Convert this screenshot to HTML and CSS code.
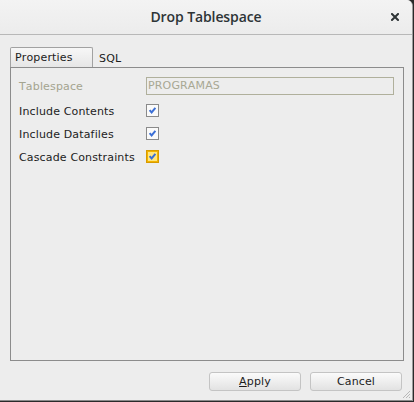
FILE: index.html
```html
<!DOCTYPE html>
<html>
<head>
<meta charset="utf-8">
<link rel="stylesheet" href="styles.css">
</head>
<body>
<div class="window">
  <div class="titlebar">
    <span class="title">Drop Tablespace</span>
    <svg class="close" width="8" height="8" viewBox="0 0 8 8"><path d="M1 1 L7 7 M7 1 L1 7" stroke="#2e3436" stroke-width="2" stroke-linecap="square"/></svg>
  </div>
  <div class="content">
    <div class="tabs">
      <div class="tab active">Properties</div>
      <div class="tab">SQL</div>
    </div>
    <div class="panel">
      <div class="form">
        <label class="lbl disabled">Tablespace</label>
        <div class="field">PROGRAMAS</div>
      </div>
      <div class="checks">
        <div class="row"><span class="lbl">Include Contents</span>
          <svg class="cb" width="13" height="13" viewBox="0 0 13 13"><rect x="0.5" y="0.5" width="12" height="12" fill="#fafafa" stroke="#8a8a8a"/><path d="M3.6 6.2 L5.6 8.4 L9.4 3.9" fill="none" stroke="#3b6fd6" stroke-width="2"/></svg></div>
        <div class="row"><span class="lbl">Include Datafiles</span>
          <svg class="cb" width="13" height="13" viewBox="0 0 13 13"><rect x="0.5" y="0.5" width="12" height="12" fill="#fafafa" stroke="#8a8a8a"/><path d="M3.6 6.2 L5.6 8.4 L9.4 3.9" fill="none" stroke="#3b6fd6" stroke-width="2"/></svg></div>
        <div class="row"><span class="lbl">Cascade Constraints</span>
          <svg class="cb" width="13" height="13" viewBox="0 0 13 13"><rect x="0.5" y="0.5" width="12" height="12" fill="#f2b400" stroke="#d79a00"/><rect x="2" y="2" width="9" height="9" fill="#ffe680"/><path d="M3.6 6.2 L5.6 8.4 L9.4 3.9" fill="none" stroke="#3b6fd6" stroke-width="2"/></svg></div>
      </div>
    </div>
  </div>
  <div class="footer">
    <button class="btn"><u>A</u>pply</button>
    <button class="btn">Cancel</button>
  </div>
  <svg class="grip" width="9" height="9" viewBox="0 0 9 9"><path d="M8 1 L1 8 M8 4 L4 8 M8 7 L7 8" stroke="#b8b8b8" stroke-width="1"/></svg>
</div>
</body>
</html>
```

FILE: styles.css
```css
* { box-sizing: border-box; }
html, body { margin: 0; padding: 0; }
body {
  width: 414px;
  height: 402px;
  background: #2a2a2a;
  font-family: "DejaVu Sans", sans-serif;
  font-size: 11px;
  letter-spacing: 0.15px;
  font-kerning: none;
  color: #1c1c1c;
  overflow: hidden;
}
.window {
  position: relative;
  width: 413px;
  height: 401px;
  background: #ededed;
  border-right: 1px solid #9c9c9c;
  border-bottom: 1px solid #8a8a8a;
  border-top-right-radius: 6px;
  display: flex;
  flex-direction: column;
  overflow: hidden;
}
.titlebar {
  height: 35px;
  flex: none;
  background: linear-gradient(#f3f3f3, #ececec);
  border-bottom: 1px solid #b8b8b8;
  display: flex;
  align-items: center;
  justify-content: center;
  position: relative;
}
.title {
  font-family: "Open Sans", sans-serif;
  font-weight: 600;
  font-size: 14px;
  letter-spacing: -0.1px;
  font-kerning: normal;
  color: #2e3436;
  margin-left: 0;
  margin-top: -1px;
}
.close {
  position: absolute;
  right: 13px;
  top: 13px;
}
.content {
  flex: 1;
  display: flex;
  flex-direction: column;
  padding: 12px 8px 0 10px;
}
.tabs {
  display: flex;
  height: 20px;
  flex: none;
}
.tab {
  height: 20px;
  line-height: 19px;
  padding: 0 5px;
}
.tab.active {
  width: 83px;
  border: 1px solid #a2a2a2;
  border-bottom: none;
  border-radius: 2px 2px 0 0;
  background: linear-gradient(#f7f7f7, #e6e6e6);
  padding-left: 4px;
}
.tab + .tab {
  padding-left: 6px;
  line-height: 23px;
}
.panel {
  height: 294px;
  border: 1px solid #8c8c8c;
  padding: 9px 9px 0 8px;
}
.form {
  display: grid;
  grid-template-columns: 127px 1fr;
  align-items: center;
  height: 18px;
}
.lbl { white-space: nowrap; }
.disabled { color: #a4a48f; }
.field {
  height: 18px;
  border: 1px solid #b0b09c;
  color: #a8a894;
  line-height: 16px;
  padding-left: 1px;
}
.checks {
  margin-top: 4px;
}
.row {
  display: grid;
  grid-template-columns: 127px 13px;
  align-items: center;
  height: 23px;
}
.row .lbl { padding-top: 1px; }
.cb { display: block; }
.footer {
  height: 39px;
  flex: none;
  display: flex;
  justify-content: flex-end;
  gap: 9px;
  padding: 11px 10px 0 0;
}
.btn {
  width: 92px;
  height: 19px;
  font-family: "DejaVu Sans", sans-serif;
  font-size: 11px;
  letter-spacing: 0.15px;
  color: #1c1c1c;
  border: 1px solid #c4c4c4;
  border-radius: 3px;
  background: linear-gradient(#fbfbfb, #e2e2e2);
  padding: 0;
  line-height: 17px;
}
.btn u { text-decoration: underline; text-underline-offset: 1px; }
.grip {
  position: absolute;
  right: 1px;
  bottom: 1px;
}
```
